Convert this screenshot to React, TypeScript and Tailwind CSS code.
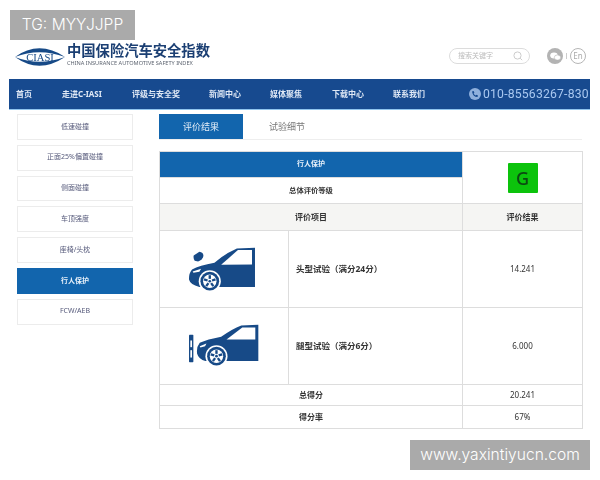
const sideItems = ["低速碰撞", "正面25%偏置碰撞", "侧面碰撞", "车顶强度", "座椅/头枕", "行人保护", "FCW/AEB"];
const navItems = [
  { label: "首页", w: "w-[46px]" },
  { label: "走进C-IASI", w: "w-[70px]" },
  { label: "评级与安全奖", w: "w-[77px]" },
  { label: "新闻中心", w: "w-[61px]" },
  { label: "媒体聚焦", w: "w-[62px]" },
  { label: "下载中心", w: "w-[61px]" },
  { label: "联系我们", w: "w-[76px]" },
];

const Wheel = ({ cx, cy }: { cx: number; cy: number }) => (
  <g>
    <circle cx={cx} cy={cy} r="33" fill="#fff" />
    <circle cx={cx} cy={cy} r="28" fill="#174a87" />
    <circle cx={cx} cy={cy} r="20" fill="#fff" />
    {[0, 72, 144, 216, 288].map((a) => (
      <rect key={a} x={cx - 3.5} y={cy - 18} width="7" height="11" fill="#174a87" transform={`rotate(${a} ${cx} ${cy})`} />
    ))}
    <circle cx={cx} cy={cy} r="4" fill="#174a87" />
  </g>
);

const CarHead = () => (
  <svg viewBox="110 50 215 140" className="w-[72px] h-[47px] block">
    <path d="M133 78 L150 67 Q162 68 162 80 Q160 92 146 96 L136 94 Q131 86 133 78Z" fill="#174a87" />
    <path d="M316 55 L262 57 Q230 70 195 100 Q150 108 128 120 Q118 132 119 150 Q122 165 150 172 L316 172Z" fill="#174a87" />
    <path d="M215 106 L265 62 L307 62 L307 105Z" fill="#fff" />
    <path d="M130 126 L155 118 L150 127 L132 130Z" fill="#fff" />
    <Wheel cx={181} cy={155} />
  </svg>
);

const CarBollard = () => (
  <svg viewBox="110 281 215 140" className="w-[72px] h-[47px] block">
    <rect x="116" y="316" width="13" height="82" rx="2" fill="#174a87" />
    <rect x="120" y="333" width="5" height="20" fill="#fff" />
    <rect x="120" y="362" width="5" height="22" fill="#fff" />
    <path d="M323 286 L272 288 Q245 298 212 322 Q170 330 148 340 Q138 352 140 372 Q145 390 165 394 L323 394Z" fill="#174a87" />
    <path d="M228 330 L275 294 L314 294 L314 330Z" fill="#fff" />
    <path d="M148 350 L168 342 L164 350 L150 354Z" fill="#fff" />
    <Wheel cx={198} cy={380} />
  </svg>
);

export default function App() {
  return (
    <div className="relative w-[600px] h-[480px] overflow-hidden bg-white font-['Noto_Sans','Noto_Sans_CJK_SC',sans-serif]">
      <div className="blur-[0.35px]">
        {/* header */}
        <div className="h-[79px] pt-[41px] pl-[14px] pr-[14px] flex items-start">
          <svg viewBox="0 0 54 24" className="w-[52px] h-[24px] mt-[4px] shrink-0">
            <path d="M1 12 Q26 -6 53 12 Q26 2 1 12Z" fill="#174a87" />
            <path d="M1 12 Q26 30 53 12 Q26 22 1 12Z" fill="#174a87" />
            <text x="27" y="16" textAnchor="middle" fontSize="11" fontFamily="Liberation Serif" fill="#174a87">CIASI</text>
          </svg>
          <div className="ml-px mt-[1px] w-[150px]">
            <div className="text-[14.3px] leading-[18px] font-bold text-[#1b3f73] whitespace-nowrap">中国保险汽车安全指数</div>
            <div className="text-[5.6px] leading-[7px] text-[#5d6470] whitespace-nowrap">CHINA INSURANCE AUTOMOTIVE SAFETY INDEX</div>
          </div>
          <div className="ml-auto mt-[7px] flex items-center">
            <div className="w-[81px] h-[16px] rounded-full border border-[#dcdcdc] flex items-center justify-between pl-[8px] pr-[6px]">
              <span className="text-[7px] text-[#bbb]">搜索关键字</span>
              <svg width="10" height="10" viewBox="0 0 10 10" fill="none" stroke="#ccc">
                <circle cx="4.5" cy="4.5" r="3.6" />
                <path d="M7.2 7.2 L9.2 9.2" />
              </svg>
            </div>
            <div className="ml-[17px] w-[16px] h-[16px] rounded-full bg-[#b3b3b3] flex items-center justify-center">
              <svg width="11" height="9" viewBox="0 0 11 9" fill="#fff">
                <ellipse cx="4" cy="3.5" rx="3.8" ry="3" />
                <ellipse cx="7.5" cy="5.5" rx="3.2" ry="2.6" stroke="#b3b3b3" strokeWidth="0.6" />
              </svg>
            </div>
            <div className="mx-[3px] w-px h-[6px] bg-[#ccc]" />
            <div className="w-[16px] h-[16px] rounded-full border border-[#b5b5b5] text-[8px] text-[#aaa] flex items-center justify-center">En</div>
          </div>
        </div>

        {/* nav */}
        <div className="ml-[9px] w-[581px] h-[31px] bg-[#174a8f] border-b border-[#8fc4ee] flex items-center overflow-hidden">
          <div className="pl-[7px] flex items-center shrink-0">
            {navItems.map((item) => (
              <div key={item.label} className={`${item.w} shrink-0 text-[8px] font-bold text-[#dfe8f5] whitespace-nowrap`}>
                {item.label}
              </div>
            ))}
          </div>
          <div className="flex items-center shrink-0">
            <div className="w-[12px] h-[12px] rounded-full bg-[#8fb0dc] flex items-center justify-center">
              <svg width="8" height="8" viewBox="0 0 8 8" fill="#174a8f">
                <path d="M1 1.5 L2.6 1 L3.4 2.8 L2.6 3.6 Q3.4 5 4.6 5.5 L5.4 4.7 L7 5.6 L6.5 7 Q2 7 1 1.5Z" />
              </svg>
            </div>
            <span className="ml-[2px] text-[12.2px] font-['Roboto',sans-serif] tracking-[0.2px] text-[#a9c8f0] whitespace-nowrap">010-85563267-830</span>
          </div>
        </div>

        {/* body */}
        <div className="flex pl-[17px] pt-[4px]">
          <div className="w-[116px] flex flex-col gap-[5px] shrink-0">
            {sideItems.map((s) => (
              <div
                key={s}
                className={
                  s === "行人保护"
                    ? "h-[25.8px] flex items-center justify-center bg-[#1265ad] text-[7px] font-bold text-[#eaf2fa]"
                    : "h-[25.8px] flex items-center justify-center bg-white border border-[#ececec] text-[7px] text-[#55597a]"
                }
              >
                {s}
              </div>
            ))}
          </div>

          <div className="ml-[26px] w-[423px]">
            <div className="flex h-[26px] border-b border-[#eeeeee]">
              <div className="w-[84px] h-[25px] bg-[#1265ad] flex items-center justify-center text-[9px] text-[#e4eef8]">评价结果</div>
              <div className="w-[88px] flex items-center justify-center text-[9px] text-[#777]">试验细节</div>
            </div>

            <table className="mt-[11px] w-[423px] h-[277px] table-fixed border-collapse text-[8px] text-[#333]">
              <colgroup>
                <col className="w-[129px]" />
                <col className="w-[174px]" />
                <col className="w-[120px]" />
              </colgroup>
              <tbody>
                <tr className="h-[26px]">
                  <td colSpan={2} className="border border-[#dddddd] bg-[#1265ad] text-center font-bold text-[7px] text-[#e8f1fa]">行人保护</td>
                  <td rowSpan={2} className="border border-[#dddddd]">
                    <div className="mx-auto w-[30px] h-[30px] rounded-[1px] bg-[#0cc30c] flex items-center justify-center text-[18px] leading-none font-medium text-[#0c4a12]">G</div>
                  </td>
                </tr>
                <tr className="h-[26px]">
                  <td colSpan={2} className="border border-[#dddddd] text-center font-bold text-[7.3px]">总体评价等级</td>
                </tr>
                <tr className="h-[27px] bg-[#f5f5f3] font-bold">
                  <td colSpan={2} className="border border-[#dddddd] text-center">评价项目</td>
                  <td className="border border-[#dddddd] text-center">评价结果</td>
                </tr>
                <tr className="h-[77px]">
                  <td className="border border-[#dddddd]">
                    <div className="flex justify-center -ml-[4px]"><CarHead /></div>
                  </td>
                  <td className="border border-[#dddddd] pl-[7px] font-bold text-[8.5px]">头型试验（满分24分）</td>
                  <td className="border border-[#dddddd] text-center">14.241</td>
                </tr>
                <tr className="h-[77px]">
                  <td className="border border-[#dddddd]">
                    <div className="flex justify-center -ml-[3px]"><CarBollard /></div>
                  </td>
                  <td className="border border-[#dddddd] pl-[7px] font-bold text-[8.5px]">腿型试验（满分6分）</td>
                  <td className="border border-[#dddddd] text-center">6.000</td>
                </tr>
                <tr className="h-[21px]">
                  <td colSpan={2} className="border border-[#dddddd] text-center font-bold">总得分</td>
                  <td className="border border-[#dddddd] text-center">20.241</td>
                </tr>
                <tr className="h-[23px]">
                  <td colSpan={2} className="border border-[#dddddd] text-center font-bold">得分率</td>
                  <td className="border border-[#dddddd] text-center">67%</td>
                </tr>
              </tbody>
            </table>
          </div>
        </div>
      </div>

      {/* watermarks */}
      <div className="absolute left-[10px] top-[10px] w-[125px] h-[30px] bg-[#aaaaaa] flex items-center justify-center text-[15.6px] text-white font-['Inter',sans-serif] font-light">TG: MYYJJPP</div>
      <div className="absolute left-[410px] top-[440px] w-[180px] h-[30px] bg-[#aaaaaa] flex items-center justify-center text-[15.6px] text-white font-['Inter',sans-serif] font-light">www.yaxintiyucn.com</div>
    </div>
  );
}
